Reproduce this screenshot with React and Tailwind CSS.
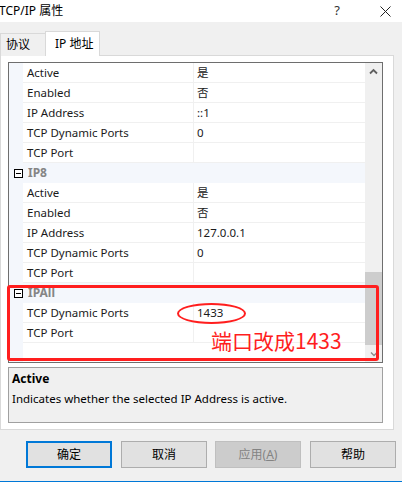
import React from 'react';

const FONT = { fontFamily: '"Noto Sans", "Noto Sans CJK SC", sans-serif' };

const sections = [
  {
    name: null,
    rows: [
      ['Active', '是'],
      ['Enabled', '否'],
      ['IP Address', '::1'],
      ['TCP Dynamic Ports', '0'],
      ['TCP Port', ''],
    ],
  },
  {
    name: 'IP8',
    rows: [
      ['Active', '是'],
      ['Enabled', '否'],
      ['IP Address', '127.0.0.1'],
      ['TCP Dynamic Ports', '0'],
      ['TCP Port', ''],
    ],
  },
  {
    name: 'IPAll',
    rows: [
      ['TCP Dynamic Ports', '1433'],
      ['TCP Port', ''],
    ],
  },
];

const MinusBox = () => (
  <div className="w-[9px] h-[9px] border border-black flex items-center justify-center bg-white">
    <div className="w-[5px] h-px bg-black" />
  </div>
);

const CategoryRow = ({ name }) => (
  <div className="flex h-[20px] bg-[#f4f7fc] items-center">
    <div className="w-[14px] flex justify-end pr-0">
      <div className="ml-[2px]"><MinusBox /></div>
    </div>
    <span className="pl-[5px] text-[12px] font-bold text-[#858585]">{name}</span>
  </div>
);

const PropRow = ({ label, value }) => (
  <div className="flex h-[20px]">
    <div className="w-[14px] bg-[#f4f7fc] shrink-0" />
    <div className="flex flex-1 border-b border-[#f0f0f0] bg-white">
      <div className="w-[171px] pl-[4px] border-r border-[#f0f0f0] text-[11.5px] leading-[19px] text-[#1a1a1a] whitespace-nowrap">
        {label}
      </div>
      <div className="flex-1 pl-[3px] text-[11.5px] leading-[19px] text-[#1a1a1a]">{value}</div>
    </div>
  </div>
);

const Scrollbar = () => (
  <div className="w-[17px] bg-[#f0f0f0] flex flex-col shrink-0">
    <div className="h-[17px] flex items-center justify-center">
      <svg width="9" height="7" viewBox="0 0 9 7">
        <path d="M1 5.5 L4.5 2 L8 5.5" fill="none" stroke="#606060" strokeWidth="1.8" />
      </svg>
    </div>
    <div className="flex-1 flex flex-col justify-end">
      <div className="h-[73px] bg-[#cdcdcd]" />
    </div>
    <div className="h-[17px] flex items-center justify-center">
      <svg width="8" height="6" viewBox="0 0 8 6">
        <path d="M1 1.5 L4 4.5 L7 1.5" fill="none" stroke="#8a8a8a" strokeWidth="1.3" />
      </svg>
    </div>
  </div>
);

const Button = ({ children, primary, disabled, className }) => (
  <div
    className={
      'h-[27px] w-[86px] flex items-center justify-center text-[12px] ' +
      (primary
        ? 'border-2 border-[#0078d7] bg-[#e1e1e1] text-black '
        : disabled
        ? 'border border-[#bfbfbf] bg-[#cccccc] text-[#838383] '
        : 'border border-[#adadad] bg-[#e1e1e1] text-black ') +
      className
    }
  >
    {children}
  </div>
);

export default function App() {
  return (
    <div className="relative w-[402px] h-[482px] bg-[#f0f0f0] overflow-hidden" style={FONT}>
      {/* title bar */}
      <div className="h-[22px] bg-white flex items-center text-[12px] text-black">
        <span className="-ml-px">TCP/IP 属性</span>
        <span className="ml-auto mr-[40px] text-[13px] text-[#333]">?</span>
        <svg width="11" height="11" viewBox="0 0 11 11" className="mr-[11px]">
          <path d="M0.5 0.5 L10.5 10.5 M10.5 0.5 L0.5 10.5" stroke="#222" strokeWidth="1" />
        </svg>
      </div>

      {/* tabs */}
      <div className="flex items-end h-[34px] relative z-10">
        <div className="w-[46px] h-[23px] border border-b-0 border-[#d9d9d9] bg-[#f0f0f0] text-[12px] pl-[5px] leading-[21px] text-black">
          协议
        </div>
        <div className="w-[55px] h-[25px] -ml-px border border-b-0 border-[#d9d9d9] bg-white text-[12px] pl-[9px] leading-[23px] text-black">
          IP 地址
        </div>
      </div>

      {/* tab panel */}
      <div className="-mt-px w-[394px] h-[375px] border border-[#d9d9d9] bg-white pl-[7px] pt-[6px]">
        <div className="w-[375px] h-[301px] border border-[#6e6e6e] flex">
          <div className="flex-1 flex flex-col">
            {sections.map((s, i) => (
              <React.Fragment key={i}>
                {s.name && <CategoryRow name={s.name} />}
                {s.rows.map(([l, v], j) => (
                  <PropRow key={j} label={l} value={v} />
                ))}
              </React.Fragment>
            ))}
            <div className="flex flex-1">
              <div className="w-[14px] bg-[#f4f7fc]" />
              <div className="flex-1 bg-white" />
            </div>
          </div>
          <Scrollbar />
        </div>

        <div className="mt-[4px] w-[375px] h-[56px] border border-[#a0a0a0] bg-[#f0f0f0] pl-[3px] pt-[3px] text-[12px] text-black">
          <div className="font-bold leading-[16px]">Active</div>
          <div className="mt-[4px] leading-[16px] text-[11.5px]">Indicates whether the selected IP Address is active.</div>
        </div>
      </div>

      {/* buttons */}
      <div className="flex mt-[11px]">
        <Button primary className="ml-[26px]">确定</Button>
        <Button className="ml-[9px]">取消</Button>
        <Button disabled className="ml-[8px]">应用(<span className="underline">A</span>)</Button>
        <Button className="ml-[9px]">帮助</Button>
      </div>

      <div className="absolute left-0 bottom-0 w-full h-px bg-[#0078d7]" />

      {/* red annotations */}
      <div className="absolute left-[7px] top-[285px] w-[372px] h-[76px] border-[3px] border-[#ff1e1e] rounded-[3px]" />
      <div className="absolute left-[177px] top-[303px] w-[69px] h-[21px] border-2 border-[#ff1e1e] rounded-[50%]" />
      <div
        className="absolute left-[211px] top-[325px] text-[21px] leading-[30px] text-[#ff1e1e] whitespace-nowrap"
        style={{ fontFamily: '"Noto Sans CJK SC", "Noto Sans", sans-serif' }}
      >
        端口改成1433
      </div>
    </div>
  );
}
